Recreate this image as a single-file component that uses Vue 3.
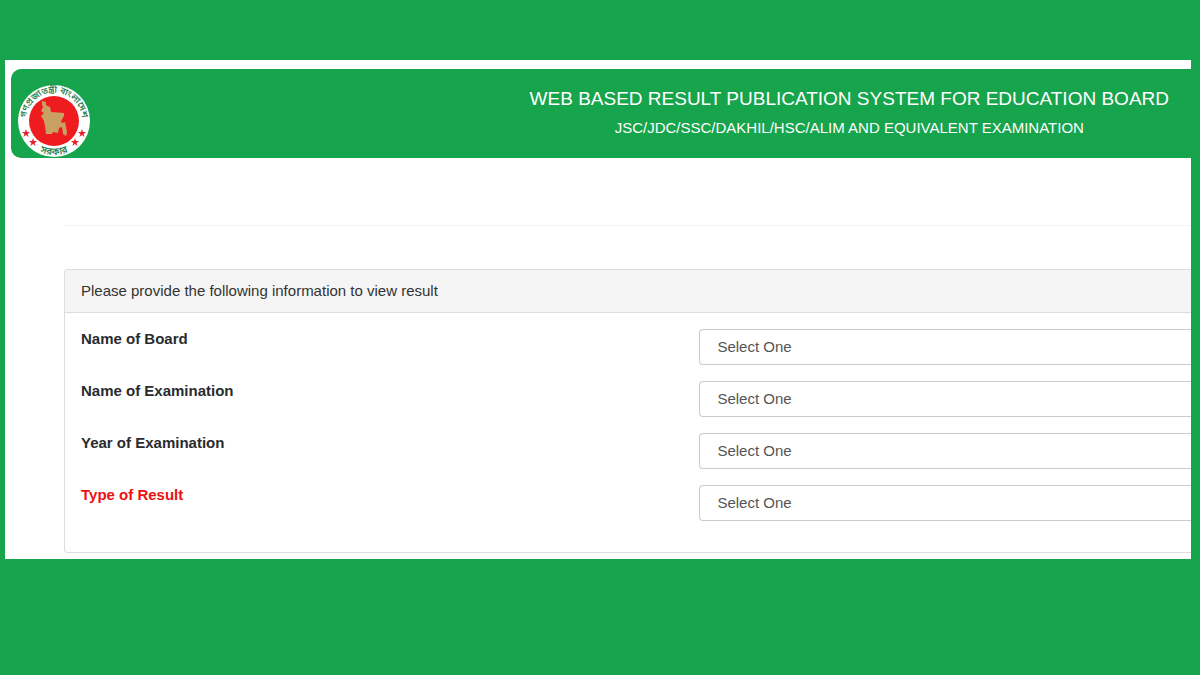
<template>
  <div class="page">
    <main class="sheet">
      <header class="banner">
        <svg class="logo" viewBox="0 0 74 74" role="img" aria-label="Government seal">
          <defs>
            <path id="arc-top" d="M 9.500 42 A 28 28 0 1 1 64.500 42" />
            <path id="arc-bottom" d="M 12 60 A 34 34 0 0 0 62 60" />
          </defs>
          <circle cx="37" cy="37" r="36" fill="#fff" />
          <circle cx="37" cy="37" r="25" fill="#ee1c1f" />
          <path
            transform="translate(-1 2)"
            fill="#c8a062"
            d="M26 15L30 16L30 19L34 21L35 26L48 27L48 30L45 35L46 37L49 36L51 46L50 50L47 48L46 41L43 42L42 47L37 46L36 48L30 48L29 40L28 35L25 30L28 27L25 25L27 21L26 19z"
          />
          <g class="ring-text">
            <text><textPath href="#arc-top" startOffset="50%" text-anchor="middle">গণপ্রজাতন্ত্রী বাংলাদেশ</textPath></text>
            <text class="ring-text-bottom"><textPath href="#arc-bottom" startOffset="50%" text-anchor="middle">সরকার</textPath></text>
          </g>
          <path
            v-for="star in stars"
            :key="star.join()"
            :transform="`translate(${star[0]} ${star[1]})`"
            fill="#e8202a"
            d="M0-4l1 3h3l-2.400 2 1 3-2.600-2-2.600 2 1-3-2.400-2h3z"
          />
        </svg>
        <div class="titles">
          <h1>WEB BASED RESULT PUBLICATION SYSTEM FOR EDUCATION BOARD</h1>
          <h2>JSC/JDC/SSC/DAKHIL/HSC/ALIM AND EQUIVALENT EXAMINATION</h2>
        </div>
      </header>

      <div class="content">
        <hr />
        <form class="panel" @submit.prevent>
          <div class="panel-heading">Please provide the following information to view result</div>
          <div class="panel-body">
            <div v-for="field in fields" :key="field.id" class="row">
              <label :for="field.id" :class="{ important: field.important }">{{ field.label }}</label>
              <select :id="field.id" v-model="form[field.id]">
                <option value="">Select One</option>
              </select>
            </div>
          </div>
        </form>
      </div>
    </main>
  </div>
</template>

<script setup>
import { reactive } from 'vue'

const fields = [
  { id: 'board', label: 'Name of Board' },
  { id: 'exam', label: 'Name of Examination' },
  { id: 'year', label: 'Year of Examination' },
  { id: 'type', label: 'Type of Result', important: true },
]

const form = reactive({ board: '', exam: '', year: '', type: '' })

// positions of the red stars on the seal
const stars = [
  [9, 49],
  [16, 58],
  [58, 58],
  [65, 49],
]
</script>

<style>
body {
  margin: 0;
  background: #16a44c;
}
</style>

<style scoped>
.page {
  min-height: 100vh;
  box-sizing: border-box;
  padding: 60px 9px 60px 5px;
  background: #16a44c;
  font-family: "Liberation Sans", Arial, sans-serif;
  font-size: 15px;
  line-height: 20px;
  color: #333;
}

.sheet {
  padding: 9px 0 6px 6px;
  background: #fff;
  overflow: hidden;
}

.banner {
  display: flex;
  align-items: center;
  justify-content: space-between;
  padding: 15px 22px 0 6px;
  border-radius: 10px 0 0 10px;
  background: #16a44c;
  color: #fff;
}

.logo {
  width: 74px;
  height: 74px;
  flex: none;
}

.ring-text {
  font-family: "Noto Sans Bengali", "Noto Sans", sans-serif;
  font-size: 9px;
  font-weight: 600;
  fill: #2b8254;
}

.ring-text-bottom {
  font-size: 10px;
}

.titles {
  padding-bottom: 16px;
  text-align: center;
}

h1,
h2 {
  margin: 0;
  font-weight: normal;
}

h1 {
  font-size: 19px;
  line-height: 30px;
}

h2 {
  font-size: 15px;
  line-height: 28px;
}

.content {
  padding-left: 53px;
}

hr {
  margin: 67px 0 43px;
  border: 0;
  border-top: 1px solid #f3f3f3;
}

.panel {
  border: 1px solid #ddd;
  border-right: 0;
  border-radius: 4px 0 0 4px;
}

.panel-heading {
  padding: 11px 16px;
  border-bottom: 1px solid #ddd;
  border-top-left-radius: 3px;
  background: #f5f5f5;
}

.panel-body {
  display: grid;
  gap: 16px;
  padding: 16px 0 31px 16px;
}

.row {
  display: grid;
  grid-template-columns: 5fr 4fr;
  gap: 4px;
}

label {
  font-weight: bold;
  color: #292b2e;
}

label.important {
  color: #ee1010;
}

select {
  height: 36px;
  box-sizing: border-box;
  padding: 0 17px;
  border: 1px solid #ccc;
  border-right: 0;
  border-radius: 4px 0 0 4px;
  appearance: none;
  background: #fff;
  font: inherit;
  color: #555;
}
</style>
